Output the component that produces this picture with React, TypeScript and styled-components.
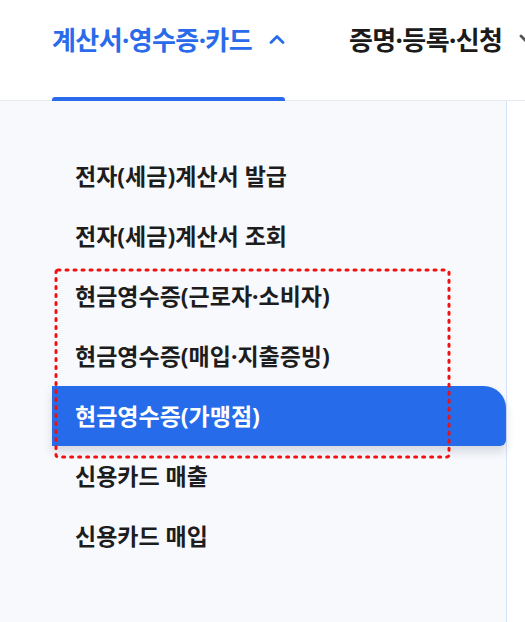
import styled, { createGlobalStyle } from "styled-components";

const GlobalStyle = createGlobalStyle`
	html, body {
		margin: 0;
		padding: 0;
		background: #ffffff;
	}
	body {
		font-family: "Noto Sans", "Noto Sans CJK KR", sans-serif;
		overflow: hidden;
	}
`;

const Page = styled.div`
	position: relative;
	width: 525px;
	height: 622px;
	display: flex;
	flex-direction: column;
	overflow: hidden;
`;

const Header = styled.header`
	height: 100px;
	flex-shrink: 0;
	display: flex;
	align-items: stretch;
	gap: 64px;
	padding-left: 52px;
	border-bottom: 1px solid #e6e9ef;
	white-space: nowrap;
`;

const Tab = styled.div<{ active?: boolean }>`
	position: relative;
	display: flex;
	align-items: center;
	gap: 17px;
	padding-bottom: 22px;
	font-size: 26px;
	font-weight: 700;
	letter-spacing: -0.6px;
	color: ${props => (props.active ? "#2a6beb" : "#1b1b1b")};
	&::after {
		content: "";
		display: ${props => (props.active ? "block" : "none")};
		position: absolute;
		left: 0;
		right: 0;
		bottom: -1px;
		height: 4px;
		border-radius: 3px 3px 0 0;
		background: #2a6beb;
	}
`;

const Body = styled.div`
	flex: 1;
	display: flex;
`;

const Panel = styled.nav`
	width: 506px;
	background: #f8f9fd;
	border-right: 1px solid #d7e3fa;
	padding-top: 45px;
	display: flex;
	flex-direction: column;
`;

const Item = styled.a<{ active?: boolean }>`
	display: flex;
	align-items: center;
	height: 60px;
	margin-left: 52px;
	padding-left: 23px;
	padding-bottom: 3px;
	box-sizing: border-box;
	font-size: 23px;
	font-weight: 700;
	letter-spacing: 0;
	text-decoration: none;
	color: ${props => (props.active ? "#ffffff" : "#1d1d1d")};
	background: ${props => (props.active ? "#266cea" : "transparent")};
	border-radius: ${props => (props.active ? "0 22px 6px 0" : "0")};
	box-shadow: ${props => (props.active ? "0 6px 10px rgba(40, 50, 80, 0.16)" : "none")};
`;

const Highlight = styled.svg`
	position: absolute;
	left: 54px;
	top: 268px;
	pointer-events: none;
`;

function Chevron({ up, color }: { up?: boolean; color: string }) {
	return (
		<svg width="16" height="10" viewBox="0 0 16 10">
			<path
				d={up ? "M2 8.5 L8 2.5 L14 8.5" : "M2 2 L8 8 L14 2"}
				fill="none"
				stroke={color}
				strokeWidth="2.8"
				strokeLinecap="round"
				strokeLinejoin="round"
			/>
		</svg>
	);
}

const menu = [
	"전자(세금)계산서 발급",
	"전자(세금)계산서 조회",
	"현금영수증(근로자·소비자)",
	"현금영수증(매입·지출증빙)",
	"현금영수증(가맹점)",
	"신용카드 매출",
	"신용카드 매입",
];

function App() {
	return (
		<>
			<GlobalStyle />
			<Page>
				<Header>
					<Tab active>
						계산서·영수증·카드
						<Chevron up color="#2a6beb" />
					</Tab>
					<Tab>
						증명·등록·신청
						<Chevron color="#555" />
					</Tab>
				</Header>
				<Body>
					<Panel>
						{menu.map((label, i) => (
							<Item key={label} href="#" active={i === 4}>
								{label}
							</Item>
						))}
					</Panel>
				</Body>
				<Highlight width="398" height="191" viewBox="0 0 398 191">
					<rect
						x="2"
						y="2"
						width="393"
						height="187"
						rx="2"
						fill="none"
						stroke="#f01010"
						strokeWidth="3"
						strokeDasharray="2 6"
						strokeLinecap="round"
					/>
				</Highlight>
			</Page>
		</>
	);
}

export default App;
